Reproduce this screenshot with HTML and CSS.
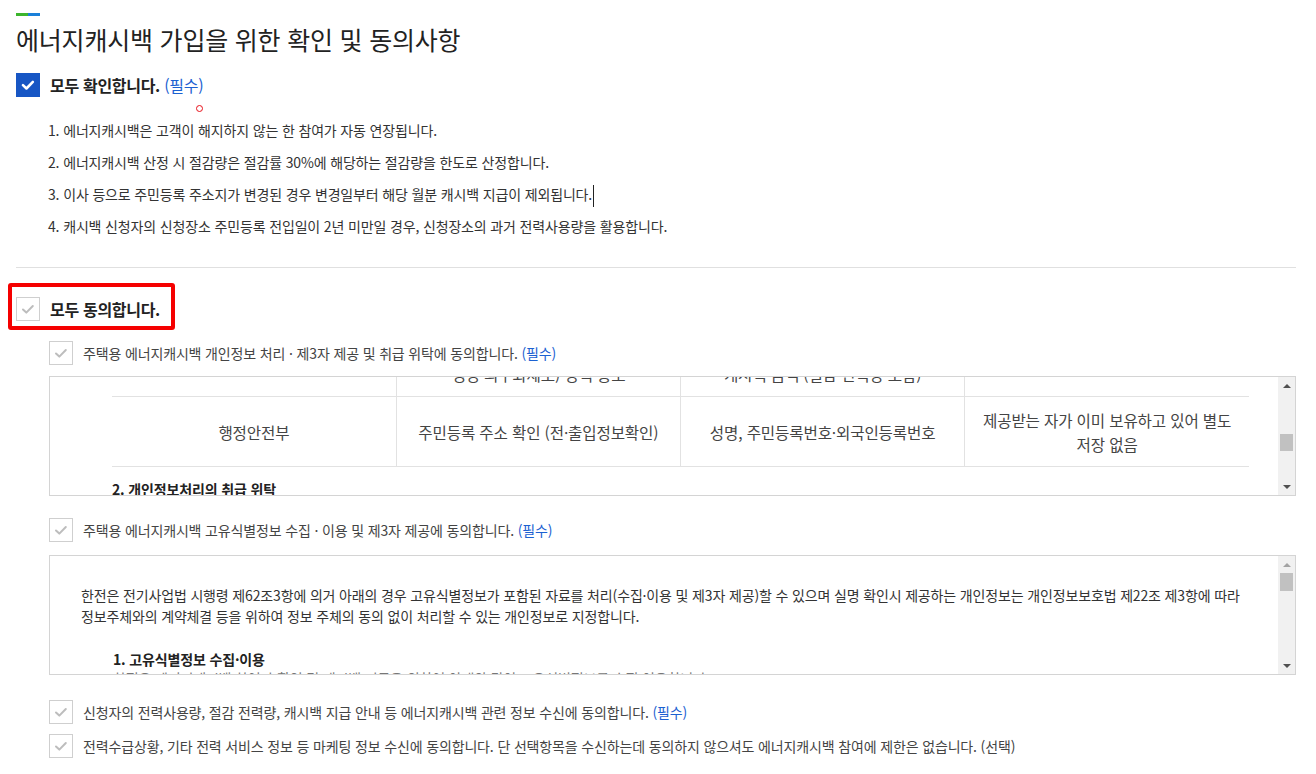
FILE: index.html
```html
<!DOCTYPE html>
<html lang="ko">
<head>
<meta charset="utf-8">
<title>에너지캐시백 가입을 위한 확인 및 동의사항</title>
<link rel="stylesheet" href="styles.css">
</head>
<body>
<div class="page">
  <div class="accent"></div>
  <h1 class="title">에너지캐시백 가입을 위한 확인 및 동의사항</h1>

  <div class="check-row confirm-all">
    <span class="cb cb-on"><svg width="24" height="24" viewBox="0 0 24 24"><path d="M6.5 12.2 L10.3 15.8 L17.3 8.6" fill="none" stroke="#fff" stroke-width="2.8" stroke-linecap="round" stroke-linejoin="round"/></svg></span>
    <span class="main-label">모두 확인합니다. <span class="req">(필수)</span></span>
    <span class="marker"></span>
  </div>

  <ul class="notice">
    <li>1. 에너지캐시백은 고객이 해지하지 않는 한 참여가 자동 연장됩니다.</li>
    <li>2. 에너지캐시백 산정 시 절감량은 절감률 30%에 해당하는 절감량을 한도로 산정합니다.</li>
    <li>3. 이사 등으로 주민등록 주소지가 변경된 경우 변경일부터 해당 월분 캐시백 지급이 제외됩니다.<span class="caret"></span></li>
    <li>4. 캐시백 신청자의 신청장소 주민등록 전입일이 2년 미만일 경우, 신청장소의 과거 전력사용량을 활용합니다.</li>
  </ul>

  <hr class="divider">

  <div class="check-row agree-all">
    <span class="cb"><svg width="22" height="22" viewBox="0 0 22 22"><path d="M6 11.5 L9.3 14.6 L15.8 8" fill="none" stroke="#bdbdbd" stroke-width="2" stroke-linecap="round" stroke-linejoin="round"/></svg></span>
    <span class="main-label">모두 동의합니다.</span>
    <span class="highlight"></span>
  </div>

  <div class="sub">
    <div class="check-row sub-row first">
      <span class="cb"><svg width="22" height="22" viewBox="0 0 22 22"><path d="M6 11.5 L9.3 14.6 L15.8 8" fill="none" stroke="#bdbdbd" stroke-width="2" stroke-linecap="round" stroke-linejoin="round"/></svg></span>
      <span class="sub-label">주택용 에너지캐시백 개인정보 처리 · 제3자 제공 및 취급 위탁에 동의합니다. <span class="req">(필수)</span></span>
    </div>

    <div class="scroll-box">
      <div class="scroll-view">
        <div class="scroll-inner table-inner">
          <table class="info-table">
            <tr class="row-top">
              <td></td>
              <td>행정 의무화제도) 정책 홍보</td>
              <td>캐시백 금액 (절감 전력량 포함)</td>
              <td></td>
            </tr>
            <tr>
              <td>행정안전부</td>
              <td>주민등록 주소 확인 (전·출입정보확인)</td>
              <td>성명, 주민등록번호·외국인등록번호</td>
              <td>제공받는 자가 이미 보유하고 있어 별도<br>저장 없음</td>
            </tr>
          </table>
          <h4 class="sec-head">2. 개인정보처리의 취급 위탁</h4>
        </div>
      </div>
      <div class="sbar">
        <span class="sbtn"><span class="arr up"></span></span>
        <span class="track"><span class="thumb t1"></span></span>
        <span class="sbtn"><span class="arr down"></span></span>
      </div>
    </div>

    <div class="check-row sub-row second">
      <span class="cb"><svg width="22" height="22" viewBox="0 0 22 22"><path d="M6 11.5 L9.3 14.6 L15.8 8" fill="none" stroke="#bdbdbd" stroke-width="2" stroke-linecap="round" stroke-linejoin="round"/></svg></span>
      <span class="sub-label">주택용 에너지캐시백 고유식별정보 수집 · 이용 및 제3자 제공에 동의합니다. <span class="req">(필수)</span></span>
    </div>

    <div class="scroll-box box2">
      <div class="scroll-view">
        <div class="scroll-inner text-inner">
          <p class="para">한전은 전기사업법 시행령 제62조3항에 의거 아래의 경우 고유식별정보가 포함된 자료를 처리(수집·이용 및 제3자 제공)할 수 있으며 실명 확인시 제공하는 개인정보는 개인정보보호법 제22조 제3항에 따라<br>정보주체와의 계약체결 등을 위하여 정보 주체의 동의 없이 처리할 수 있는 개인정보로 지정합니다.</p>
          <h4 class="sec-head indent">1. 고유식별정보 수집·이용</h4>
          <p class="para indent peek">한전은 에너지캐시백 참여자 확인 및 캐시백 지급을 위하여 아래와 같이 고유식별정보를 수집·이용합니다.</p>
        </div>
      </div>
      <div class="sbar">
        <span class="sbtn"><span class="arr up dim"></span></span>
        <span class="track"><span class="thumb t2"></span></span>
        <span class="sbtn"><span class="arr down"></span></span>
      </div>
    </div>

    <div class="check-row sub-row third">
      <span class="cb"><svg width="22" height="22" viewBox="0 0 22 22"><path d="M6 11.5 L9.3 14.6 L15.8 8" fill="none" stroke="#bdbdbd" stroke-width="2" stroke-linecap="round" stroke-linejoin="round"/></svg></span>
      <span class="sub-label">신청자의 전력사용량, 절감 전력량, 캐시백 지급 안내 등 에너지캐시백 관련 정보 수신에 동의합니다. <span class="req">(필수)</span></span>
    </div>

    <div class="check-row sub-row fourth">
      <span class="cb"><svg width="22" height="22" viewBox="0 0 22 22"><path d="M6 11.5 L9.3 14.6 L15.8 8" fill="none" stroke="#bdbdbd" stroke-width="2" stroke-linecap="round" stroke-linejoin="round"/></svg></span>
      <span class="sub-label">전력수급상황, 기타 전력 서비스 정보 등 마케팅 정보 수신에 동의합니다. 단 선택항목을 수신하는데 동의하지 않으셔도 에너지캐시백 참여에 제한은 없습니다. (선택)</span>
    </div>
  </div>
</div>
</body>
</html>
```

FILE: styles.css
```css
* { box-sizing: border-box; }
html, body { margin: 0; padding: 0; background: #fff; }
body {
  font-family: "Noto Sans CJK KR", "Noto Sans", sans-serif;
  color: #333;
  letter-spacing: -0.15px;
}
.page { padding: 13px 20px 0 16px; }

.accent {
  width: 24px;
  height: 3px;
  background: linear-gradient(90deg, #3cb52c 0 12px, #1a80d9 12px 24px);
}
.title {
  margin: 8px 0 0;
  font-size: 25px;
  line-height: 30px;
  font-weight: 400;
  color: #222;
  letter-spacing: -0.2px;
}

.check-row {
  display: flex;
  align-items: center;
  gap: 10px;
  height: 24px;
  position: relative;
}
.confirm-all { margin-top: 19px; }
.cb {
  flex: none;
  width: 24px;
  height: 24px;
  border: 1px solid #cfcfcf;
  background: #fff;
  display: flex;
  align-items: center;
  justify-content: center;
}
.cb svg { display: block; }
.cb-on { background: #1756c4; border-color: #1756c4; }

.main-label {
  font-size: 16px;
  font-weight: 700;
  letter-spacing: -0.3px;
  color: #222;
}
.req { color: #1c61d1; font-weight: 400; }

.marker {
  position: absolute;
  left: 180px;
  top: 32px;
  width: 7px;
  height: 7px;
  border: 1.6px solid #e8101a;
  border-radius: 50%;
}

.notice {
  list-style: none;
  margin: 17px 0 0;
  padding: 0 0 0 32px;
  font-size: 14px;
  line-height: 32px;
  color: #333;
}
.caret {
  display: inline-block;
  width: 0;
  height: 22px;
  border-left: 1px solid #222;
  vertical-align: middle;
  margin-left: 1px;
}

.divider {
  margin: 25px 0 0;
  border: 0;
  border-top: 1px solid #e0e0e0;
  height: 0;
}

.agree-all { margin-top: 29px; }
.highlight {
  position: absolute;
  left: -8px;
  top: -14px;
  width: 167px;
  height: 47px;
  border: 4px solid #f50000;
  border-radius: 3px;
}

.sub { padding-left: 33px; }
.sub-label {
  font-size: 14px;
  color: #444;
}
.sub-row.first { margin-top: 20px; }
.sub-row.second { margin-top: 22px; }
.sub-row.third { margin-top: 25px; }
.sub-row.fourth { margin-top: 10px; }

.scroll-box {
  margin-top: 11px;
  height: 120px;
  border: 1px solid #d4d4d4;
  display: flex;
  background: #fff;
}
.scroll-box.box2 { margin-top: 13px; }
.scroll-view { flex: 1; overflow: hidden; }

.table-inner { margin-top: -26px; padding: 0 29px 0 62px; }
.info-table {
  width: 100%;
  border-collapse: collapse;
  table-layout: fixed;
  font-size: 15.6px;
  color: #444;
}
.info-table td {
  border-bottom: 1px solid #e2e2e2;
  border-left: 1px solid #e2e2e2;
  padding: 11px 10px 10px;
  line-height: 24px;
  text-align: center;
  vertical-align: middle;
}
.info-table td:first-child { border-left: 0; }

.sec-head {
  margin: 10px 0 0;
  font-size: 14px;
  line-height: 24px;
  font-weight: 700;
  color: #222;
}

.text-inner { padding: 29px 20px 0 31px; white-space: nowrap; }
.para {
  margin: 0;
  font-size: 14px;
  line-height: 21px;
  color: #333;
}
.text-inner .sec-head { margin-top: 21px; line-height: 22px; }
.indent { padding-left: 32px; }
.text-inner .para.peek { margin-top: -2px; color: #777; }

.sbar {
  flex: none;
  width: 17px;
  background: #f1f1f1;
  display: flex;
  flex-direction: column;
}
.sbtn {
  flex: none;
  height: 17px;
  display: flex;
  align-items: center;
  justify-content: center;
}
.track { flex: 1; display: block; }
.thumb {
  display: block;
  margin: 0 2px;
  background: #c1c1c1;
}
.thumb.t1 { margin-top: 40px; height: 17px; }
.thumb.t2 { margin-top: 0; height: 18px; }
.arr { width: 0; height: 0; border-left: 4px solid transparent; border-right: 4px solid transparent; }
.arr.up { border-bottom: 4px solid #505050; }
.arr.down { border-top: 4px solid #505050; }
.arr.up.dim { border-bottom-color: #a3a3a3; }
```
